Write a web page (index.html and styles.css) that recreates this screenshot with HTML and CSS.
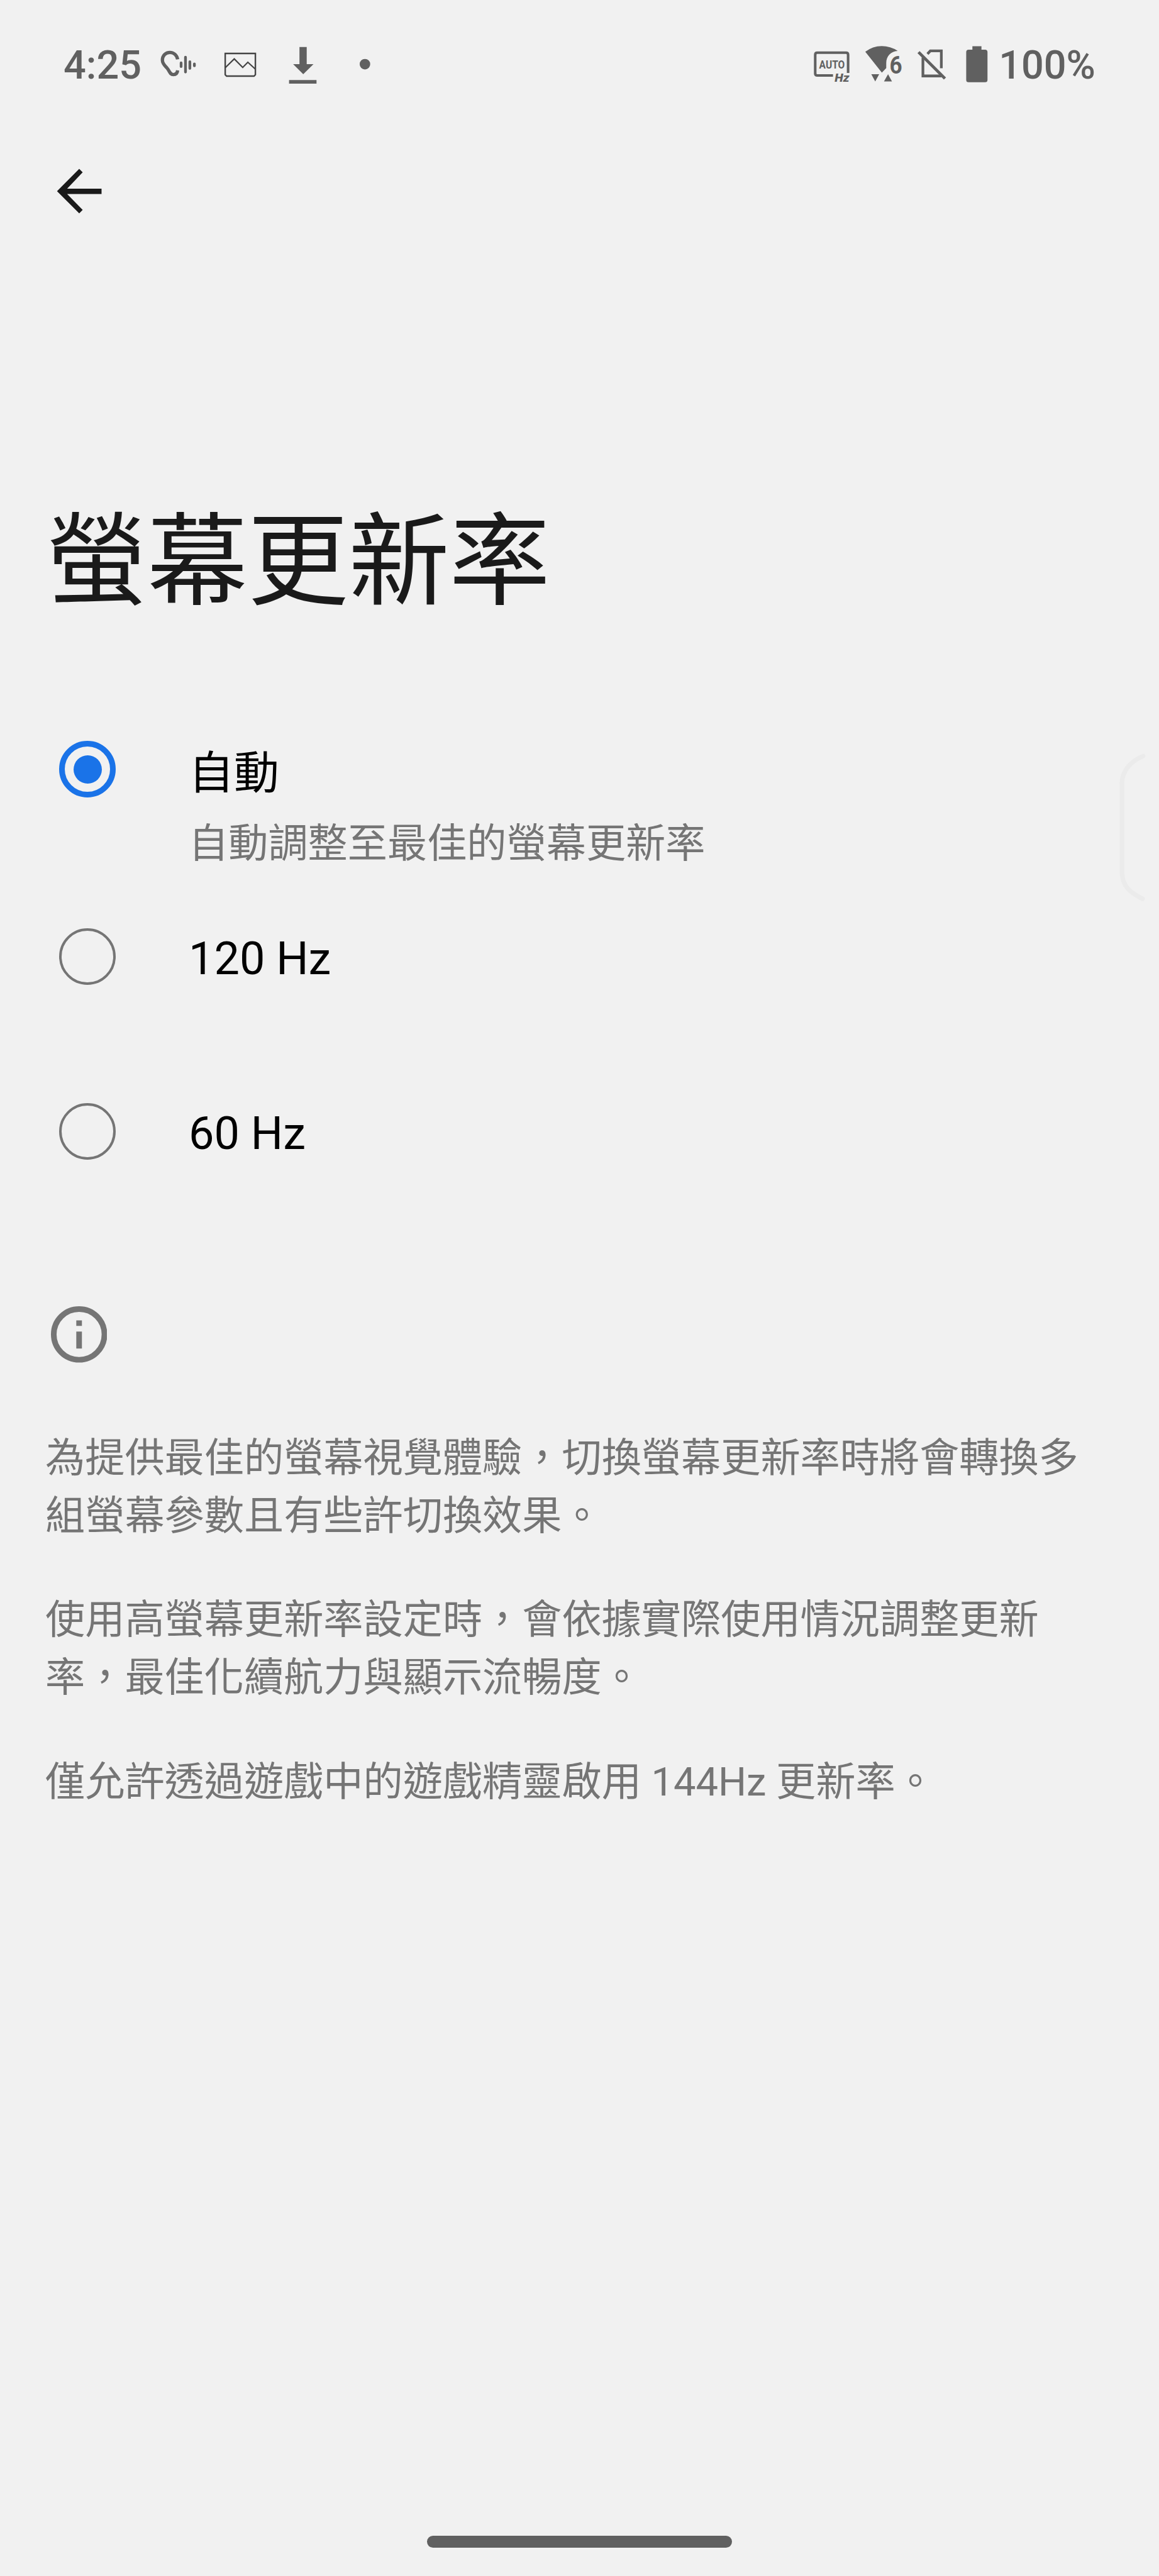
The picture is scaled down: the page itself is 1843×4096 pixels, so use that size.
FILE: index.html
```html
<!DOCTYPE html>
<html lang="zh-Hant">
<head>
    <meta charset="UTF-8">
    <meta name="viewport" content="width=device-width, initial-scale=1.0">
    <title>螢幕更新率</title>
    <link rel="stylesheet" href="styles.css">
</head>
<body>
    <header class="status-bar">
        <span class="clock">4:25</span>
        <svg class="icon icon-ear" viewBox="750 100 260 300">
            <path class="line" stroke-width="22" d="M877 214C872 187 852 168 826 168C796 168 776 190 776 219C776 243 792 256 806 271C824 291 824 315 849 315C866 315 875 305 877 287"/>
            <path class="line round" stroke-width="18" d="M900 237V262M929 200V298M958 230V274M988 244V257"/>
        </svg>
        <svg class="icon icon-image" viewBox="40 100 230 300">
            <path class="line dark" stroke-width="10" d="M53 175H253V316L244 325H62L53 316Z"/>
            <path class="line dark" stroke-width="9" d="M54 269L113 211L169 268L203 233L252 278"/>
        </svg>
        <svg class="icon icon-download" viewBox="465 100 205 300">
            <path d="M545 132H593V246H638L570 312L503 246H545ZM476 351H658V375H476Z"/>
        </svg>
        <svg class="icon icon-dot" viewBox="935 100 85 300">
            <circle cx="978" cy="246" r="35"/>
        </svg>

        <div class="status-right">
            <svg class="icon icon-auto" viewBox="100 100 255 300">
                <path class="line" stroke-width="17" d="M336 304V184Q336 170 322 170H132Q118 170 118 184V308Q118 321 132 321H236"/>
                <text class="auto" x="144" y="274" font-size="80" textLength="170" lengthAdjust="spacingAndGlyphs">AUTO</text>
                <text class="hz" x="247" y="361" font-size="73" textLength="97" lengthAdjust="spacingAndGlyphs">Hz</text>
            </svg>
            <svg class="icon icon-wifi" viewBox="445 100 265 300">
                <path d="M453 164Q502 126 562 126Q620 126 668 158C622 160 592 194 592 238V272L563 302Z"/>
                <path d="M493 313H545L519 360ZM604 313L630 360H577Z"/>
                <text class="six" x="614" y="308" font-size="163" textLength="84" lengthAdjust="spacingAndGlyphs">6</text>
            </svg>
            <svg class="icon icon-sim" viewBox="795 100 200 300">
                <path class="line" stroke-width="18" d="M865 178L884 158H957V273M835 202V324H957"/>
                <path class="line" stroke-width="20" d="M806 166L981 341"/>
            </svg>
            <svg class="icon icon-battery" viewBox="155 100 155 300">
                <path d="M202 127H262V150H286Q302 150 302 166V350Q302 366 286 366H177Q161 366 161 350V166Q161 150 177 150H202Z"/>
            </svg>
            <span class="battery-level">100%</span>
        </div>
    </header>

    <nav class="toolbar">
        <svg class="back" viewBox="130 120 310 310">
            <path d="M284 130L307 153L204 262H432V297H204L307 402L284 425L137 278Z"/>
        </svg>
    </nav>

    <main>
        <h1>螢幕更新率</h1>

        <div class="options">
            <div class="option option-auto">
                <span class="radio checked"></span>
                <div class="option-text">
                    <div class="label">自動</div>
                    <div class="summary">自動調整至最佳的螢幕更新率</div>
                </div>
            </div>
            <div class="option">
                <span class="radio"></span>
                <div class="label">120 Hz</div>
            </div>
            <div class="option">
                <span class="radio"></span>
                <div class="label">60 Hz</div>
            </div>
        </div>

        <section class="footer-info">
            <svg class="info" viewBox="0 0 20 20">
                <circle class="line" cx="10" cy="10" r="9" stroke-width="2"/>
                <path d="M9 5H11V7H9ZM9 9H11V15H9Z"/>
            </svg>
            <p>為提供最佳的螢幕視覺體驗，切換螢幕更新率時將會轉換多組螢幕參數且有些許切換效果。</p>
            <p>使用高螢幕更新率設定時，會依據實際使用情況調整更新率，最佳化續航力與顯示流暢度。</p>
            <p>僅允許透過遊戲中的遊戲精靈啟用 144Hz 更新率。</p>
        </section>
    </main>

    <svg class="edge-handle" viewBox="210 120 190 1000">
        <path d="M375 150C290 185 237 250 235 330V920C240 1010 280 1050 372 1096"/>
    </svg>
    <div class="home-bar"></div>
</body>
</html>
```
FILE: styles.css
```css
* {
    box-sizing: border-box;
}

body {
    display: flex;
    flex-direction: column;
    position: relative;
    width: 1843px;
    height: 4096px;
    margin: 0;
    overflow: hidden;
    background-color: #f1f1f1;
    color: #000;
    font-family: Roboto, "Noto Sans CJK TC", sans-serif;
}

svg {
    display: block;
    flex: none;
}

.line {
    fill: none;
    stroke: #606060;
}

.dark {
    stroke: #444;
}

.round {
    stroke-linecap: round;
}

/* status bar */
.status-bar {
    display: flex;
    height: 266px;
    padding: 67px 101px 0 101px;
    color: #606060;
    fill: #606060;
    font-size: 63px;
    font-weight: 500;
    line-height: 74px;
}

.icon {
    height: 72px;
    overflow: visible;
}

.clock {
    width: 151px;
}

.icon-ear {
    width: 62.4px;
}

.icon-image {
    width: 55.2px;
    margin-left: 40.8px;
}

.icon-download {
    width: 49.2px;
    margin-left: 46.8px;
}

.icon-dot {
    width: 20.4px;
    margin-left: 63.6px;
}

.status-right {
    display: flex;
    margin-left: auto;
}

.icon-auto {
    width: 61.2px;
}

.icon-wifi {
    width: 63.6px;
    margin-left: 21.6px;
}

.icon-sim {
    width: 48px;
    margin-left: 20.4px;
}

.icon-battery {
    width: 37.2px;
    margin-left: 28.7px;
}

.battery-level {
    margin-left: 16px;
}

.auto {
    font-weight: 700;
}

.hz {
    font-weight: 900;
    font-style: italic;
}

.six {
    font-weight: 700;
}

/* toolbar */
.toolbar {
    height: 528px;
    padding-left: 89px;
}

.back {
    width: 74.4px;
    height: 74.4px;
    fill: #1a1a1a;
}

h1 {
    margin: 0;
    padding-left: 73px;
    color: #1a1a1a;
    font-size: 160.4px;
    font-weight: 400;
    line-height: 200px;
}

/* radio list */
.options {
    padding: 184px 0 0 94px;
}

.option {
    display: flex;
    align-items: center;
    gap: 116px;
    height: 278px;
}

.option-auto {
    align-items: flex-start;
    height: 204px;
}

.radio {
    display: flex;
    align-items: center;
    justify-content: center;
    width: 90px;
    height: 90px;
    border: 4.5px solid #757575;
    border-radius: 50%;
}

.checked {
    border: 9px solid #1a73e8;
}

.checked::after {
    content: "";
    width: 45px;
    height: 45px;
    border-radius: 50%;
    background-color: #1a73e8;
}

.label {
    font-size: 72px;
    line-height: 90px;
    padding-top: 7px;
}

.summary {
    margin-top: 24px;
    color: #757575;
    font-size: 63.2px;
    line-height: 84px;
}

/* footer */
.footer-info {
    padding: 139px 110px 0 72px;
    color: #757575;
    fill: #757575;
}

.info {
    width: 89.6px;
    height: 89.6px;
    margin: 0 0 105px 8.5px;
}

.info .line {
    stroke: #757575;
}

p {
    margin: 0 0 73.5px;
    font-size: 63.2px;
    line-height: 92.1px;
}

/* overlays */
.edge-handle {
    position: absolute;
    top: 1195px;
    left: 1778px;
    width: 45.6px;
    height: 240px;
    fill: none;
    stroke: #ebebeb;
    stroke-width: 30;
    stroke-linecap: round;
}

.home-bar {
    width: 485px;
    height: 19px;
    margin: auto auto 45px;
    border-radius: 10px;
    background-color: #606060;
}
```
